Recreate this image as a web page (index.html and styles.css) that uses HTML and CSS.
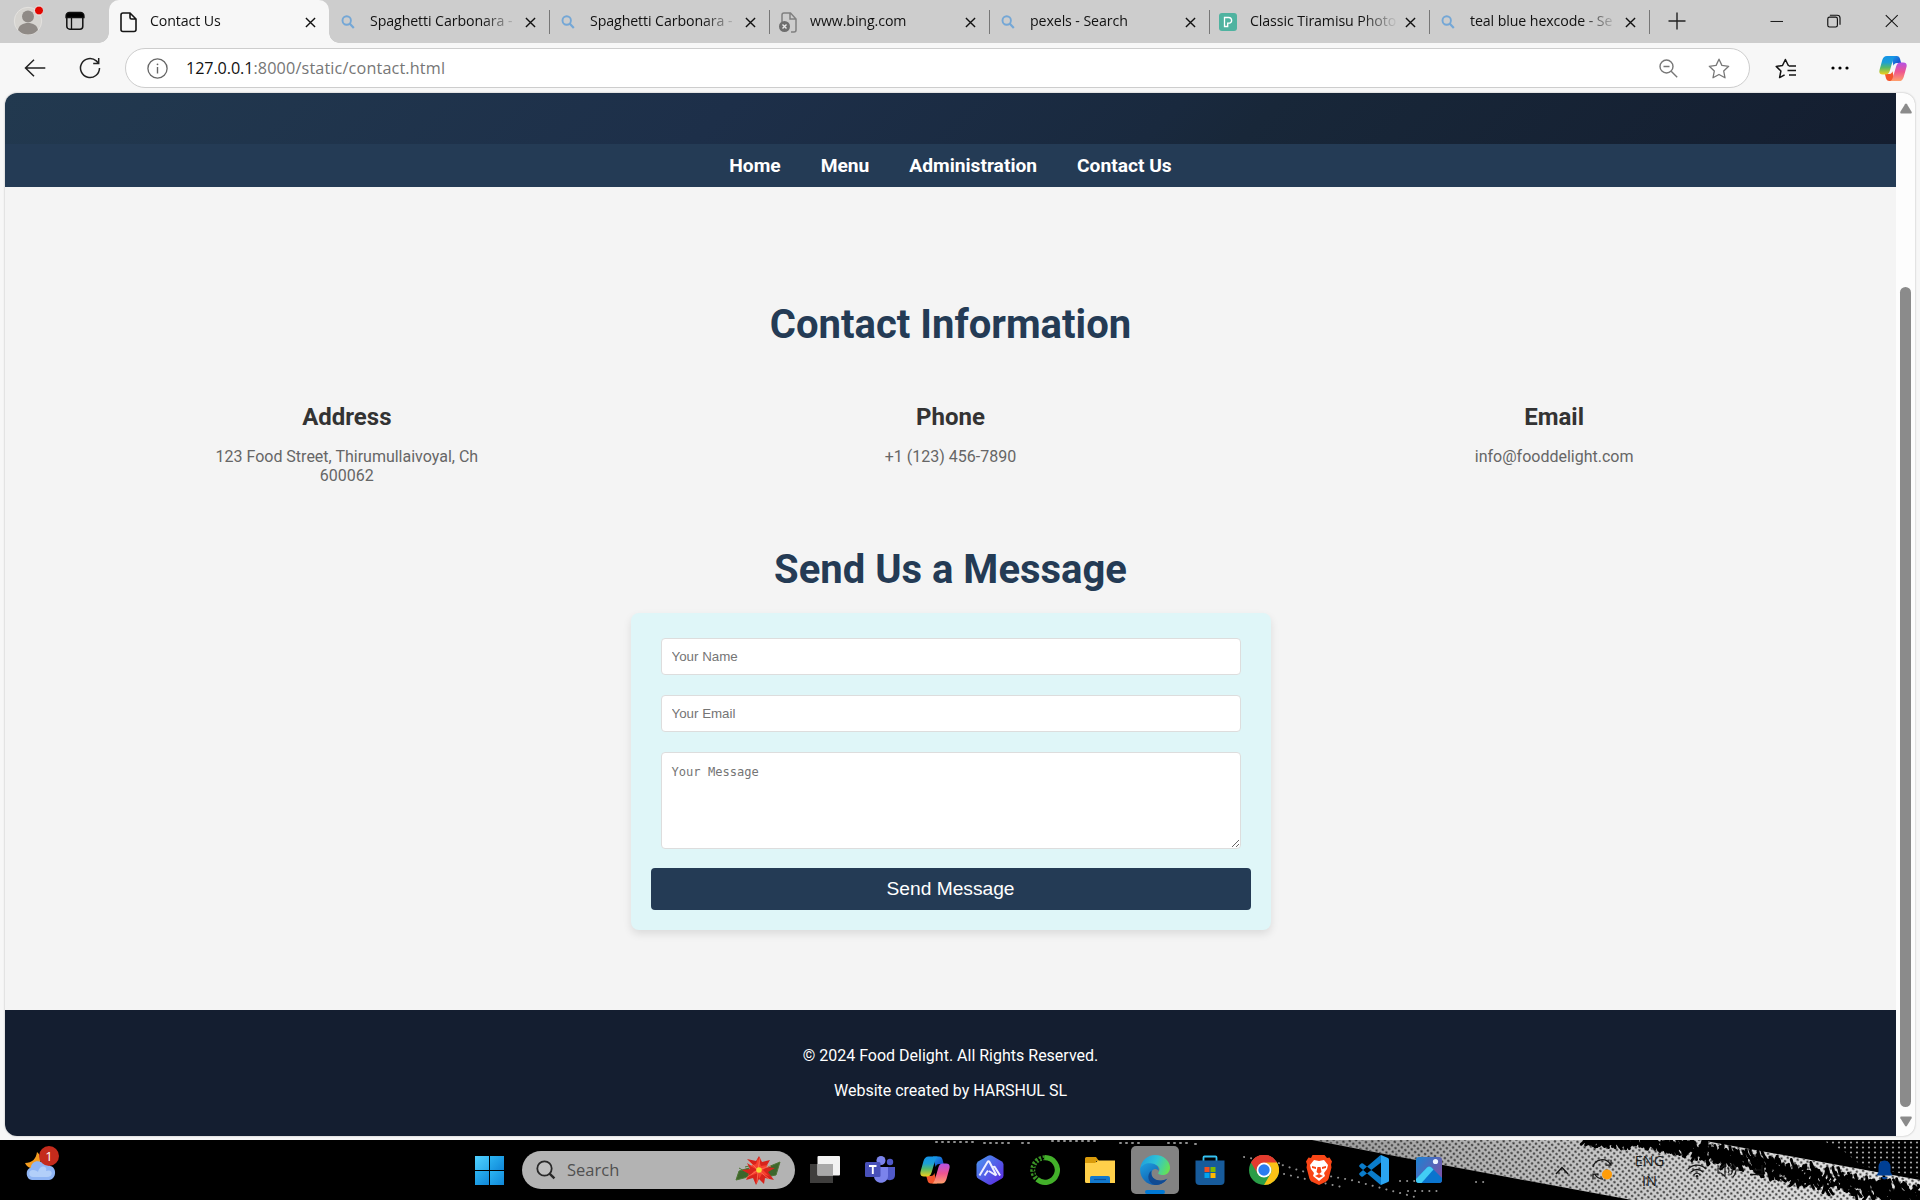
FILE: index.html
```html
<!DOCTYPE html>
<html lang="en">
<head>
<meta charset="utf-8">
<title>Contact Us</title>
<link rel="stylesheet" href="styles.css">
</head>
<body>
<svg class="defs" width="0" height="0">
  <defs>
    <symbol id="close" viewBox="0 0 12 12"><path d="M1 1l10 10M11 1L1 11" fill="none" stroke="#111" stroke-width="1.5"/></symbol>
    <symbol id="lens" viewBox="0 0 14 14"><circle cx="5.7" cy="5.5" r="4.2" fill="none" stroke="#74a7d6" stroke-width="1.9"/><path d="M8.6 8.6l4.2 4.4" stroke="#74a7d6" stroke-width="2.2"/></symbol>
    <linearGradient id="cpA" x1="0" y1="0" x2="0" y2="1"><stop offset="0" stop-color="#1493e8"/><stop offset=".35" stop-color="#1c9fd6"/><stop offset=".62" stop-color="#55b96a"/><stop offset="1" stop-color="#f3cf1b"/></linearGradient>
    <linearGradient id="cpB" x1="0" y1="0" x2="0" y2="1"><stop offset="0" stop-color="#b352e6"/><stop offset=".5" stop-color="#ee5590"/><stop offset="1" stop-color="#ffa06b"/></linearGradient>
    <linearGradient id="cpC" x1="0" y1="0" x2="1" y2="1"><stop offset="0" stop-color="#19a4ec"/><stop offset="1" stop-color="#1839c4"/></linearGradient>
    <symbol id="copilot" viewBox="0 0 30 28">
      <path d="M13 .5h6c2 0 3 1.300 3.500 3l1.200 4.500h-4.500c-2 0-3 1-3.600 3z" fill="url(#cpC)"/>
      <path d="M17 27.500h-6c-2 0-3-1.300-3.500-3L6.300 20h4.500c2 0 3-1 3.600-3z" fill="#f4552d"/>
      <path d="M8.500.5h9.300c-1.700 1-2.300 2.600-3 5l-3.200 11c-.8 2.600-2 4-4.600 4H4c-3.300 0-4.300-2-3.300-5.500L3.500 5C4.500 2 6 .5 8.500.5z" fill="url(#cpA)"/>
      <path d="M21.500 27.500h-9.300c1.700-1 2.300-2.600 3-5l3.200-11c.8-2.600 2-4 4.600-4h3c3.300 0 4.300 2 3.300 5.500L26.500 23c-1 3-2.500 4.500-5 4.500z" fill="url(#cpB)"/>
    </symbol>
  </defs>
</svg>

<header class="tabstrip">
  <div class="strip-tools">
    <svg class="avatar" width="30" height="30" viewBox="0 0 30 30"><circle cx="15" cy="16" r="13.700" fill="#d6d4d0" stroke="#e4e2df"/><circle cx="15" cy="11.500" r="6" fill="#8f8a86"/><path d="M5 25c1-5 5-7 10-7s9 2 10 7c-5 6-15 6-20 0z" fill="#8f8a86"/><circle cx="26" cy="5.500" r="4.500" fill="#e10600" stroke="#eee"/></svg>
    <svg class="workspace" width="20" height="20" viewBox="0 0 20 20"><rect x="1.800" y="2" width="16" height="16.200" rx="3" fill="none" stroke="#111" stroke-width="1.500"/><path d="M1 6.500V5a3.500 3.500 0 013.500-3.500h11A3.500 3.500 0 0119 5v1.500zM6.500 6v12" stroke="#111" stroke-width="1.300"/></svg>
  </div>
  <div class="tab active"><span class="ico"><svg width="17" height="21" viewBox="0 0 17 21"><path d="M3 1h7l6 6v10.500a2 2 0 01-2 2H3a2 2 0 01-2-2V3a2 2 0 012-2zM10 1v4.500A1.500 1.500 0 0011.500 7H16" fill="none" stroke="#151515" stroke-width="1.600"/></svg></span><span class="label">Contact Us</span><svg class="x"><use href="#close"/></svg></div>
  <div class="tab"><span class="ico"><svg width="14" height="14"><use href="#lens"/></svg></span><span class="label">Spaghetti Carbonara -</span><svg class="x"><use href="#close"/></svg></div>
  <div class="tab"><span class="ico"><svg width="14" height="14"><use href="#lens"/></svg></span><span class="label">Spaghetti Carbonara -</span><svg class="x"><use href="#close"/></svg></div>
  <div class="tab"><span class="ico"><svg width="18" height="21" viewBox="0 0 18 21"><path d="M3 10V3a2 2 0 012-2h6.500L17 7v11a2 2 0 01-2 2h-3M11 1v6h6" fill="none" stroke="#808080" stroke-width="1.500"/><circle cx="5.500" cy="14.500" r="5.500" fill="#6e6e6e"/><path d="M3.500 12.500l4 4m0-4l-4 4" stroke="#e8e8e8" stroke-width="1.400"/></svg></span><span class="label">www.bing.com</span><svg class="x"><use href="#close"/></svg></div>
  <div class="tab"><span class="ico"><svg width="14" height="14"><use href="#lens"/></svg></span><span class="label">pexels - Search</span><svg class="x"><use href="#close"/></svg></div>
  <div class="tab"><span class="ico"><svg width="18" height="18" viewBox="0 0 18 18"><rect width="18" height="18" rx="3" fill="#4fb3a0"/><path d="M5.500 13.500v-9h4.300a2.900 2.900 0 011 5.600H8.700v3.400z" fill="none" stroke="#fff" stroke-width="1.300"/></svg></span><span class="label">Classic Tiramisu Photo</span><svg class="x"><use href="#close"/></svg></div>
  <div class="tab"><span class="ico"><svg width="14" height="14"><use href="#lens"/></svg></span><span class="label">teal blue hexcode - Se</span><svg class="x"><use href="#close"/></svg></div>
  <svg class="plus" width="18" height="18" viewBox="0 0 18 18"><path d="M9 .5v17M.5 9h17" stroke="#222" stroke-width="1.400"/></svg>
  <div class="window-buttons">
    <svg viewBox="0 0 14 14"><path d="M.5 7.500h13" stroke="#111"/></svg>
    <svg viewBox="0 0 14 14"><rect x=".8" y="3" width="10" height="10.200" rx="1.800" fill="none" stroke="#111" stroke-width="1.200"/><path d="M3 1h7.500a3 3 0 013 3v7" fill="none" stroke="#111" stroke-width="1.200"/></svg>
    <svg viewBox="0 0 14 14"><path d="M.8.8l12.400 12.400M13.200.8L.8 13.200" stroke="#111" stroke-width="1.100"/></svg>
  </div>
</header>

<div class="toolbar">
  <svg class="back" width="22" height="18" viewBox="0 0 22 18"><path d="M10 .8L1.500 9l8.500 8.200M1.500 9h19.800" fill="none" stroke="#222" stroke-width="1.500"/></svg>
  <svg class="reload" width="22" height="22" viewBox="0 0 22 22"><path d="M20.500 11a9.500 9.500 0 11-3.200-7.100l2 2.100M19.700 1v5.600h-5.500" fill="none" stroke="#222" stroke-width="1.500"/></svg>
  <div class="address">
    <svg width="21" height="21" viewBox="0 0 21 21"><circle cx="10.500" cy="10.500" r="9.600" fill="none" stroke="#666" stroke-width="1.300"/><path d="M10.500 9v6.500" stroke="#666" stroke-width="1.400"/><circle cx="10.500" cy="6.300" r=".9" fill="#666"/></svg>
    <span class="url"><b>127.0.0.1</b>:8000/static/contact.html</span>
    <svg class="zoomout" width="19" height="19" viewBox="0 0 19 19"><circle cx="7.500" cy="7.500" r="6.500" fill="none" stroke="#777" stroke-width="1.400"/><path d="M4.500 7.500h6M12.200 12.200l6 6" stroke="#777" stroke-width="1.400"/></svg>
    <svg width="22" height="21" viewBox="0 0 22 21"><path d="M11 1.200l2.900 6.200 6.800.9-5 4.700 1.300 6.800-6-3.300-6 3.300 1.300-6.800-5-4.700 6.800-.9z" fill="none" stroke="#777" stroke-width="1.300" stroke-linejoin="round"/></svg>
  </div>
  <svg class="favs" width="22" height="21" viewBox="0 0 22 21"><path d="M14 7.500h-.7L10.400 1.500 7.500 7.500l-6.300.9 4.700 4.600-1.300 6.600 5-2.800M14 8h7M12.500 12.500h8.500M14 17h7" fill="none" stroke="#151515" stroke-width="1.500" stroke-linejoin="round"/></svg>
  <svg class="more" width="18" height="4" viewBox="0 0 18 4"><circle cx="2" cy="2" r="1.600"/><circle cx="9" cy="2" r="1.600"/><circle cx="16" cy="2" r="1.600"/></svg>
  <svg class="cp" width="28" height="27"><use href="#copilot"/></svg>
</div>

<div class="viewport">
  <div class="page">
    <div class="hero"></div>
    <nav class="nav"><a>Home</a><a>Menu</a><a>Administration</a><a>Contact Us</a></nav>
    <main class="main">
      <h2>Contact Information</h2>
      <div class="info">
        <div><h3>Address</h3><p>123 Food Street, Thirumullaivoyal, Ch<br>600062</p></div>
        <div><h3>Phone</h3><p>+1 (123) 456-7890</p></div>
        <div><h3>Email</h3><p>info@fooddelight.com</p></div>
      </div>
      <h2>Send Us a Message</h2>
      <form class="form">
        <input type="text" placeholder="Your Name">
        <input type="email" placeholder="Your Email">
        <textarea placeholder="Your Message"></textarea>
        <button type="button">Send Message</button>
      </form>
    </main>
    <footer class="footer"><p>© 2024 Food Delight. All Rights Reserved.</p><p>Website created by HARSHUL SL</p></footer>
  </div>
  <div class="scrollbar">
    <svg width="12" height="11" viewBox="0 0 12 11"><path d="M5 1.200a1.200 1.200 0 012 0l4.600 7.600c.4.800 0 1.600-1 1.600H1.400c-1 0-1.400-.8-1-1.600z" fill="#8b8b8b"/></svg>
    <div class="thumb"></div>
    <svg width="12" height="11" viewBox="0 0 12 11"><path d="M5 9.800a1.200 1.200 0 002 0l4.600-7.600c.4-.8 0-1.600-1-1.600H1.400c-1 0-1.400.8-1 1.600z" fill="#8b8b8b"/></svg>
  </div>
</div>

<div class="taskbar">
  <svg class="wallpaper" width="1920" height="60" viewBox="0 0 1920 60">
    <defs>
      <pattern id="dots" width="4.500" height="4.500" patternUnits="userSpaceOnUse" patternTransform="rotate(38)"><circle cx="2.200" cy="2.200" r="1.150" fill="#333"/></pattern>
      <pattern id="pale" width="6" height="5" patternUnits="userSpaceOnUse"><circle cx="3" cy="2.500" r="1.100" fill="#a5a5a5"/></pattern>
      <linearGradient id="gray"><stop offset="0" stop-color="#999"/><stop offset=".5" stop-color="#c8c8c8"/><stop offset="1" stop-color="#e8e8e8"/></linearGradient>
    </defs>
    <path d="M1312 0H1700L1800 18 1920 40V60H1632L1540 43 1400 17z" fill="url(#gray)"/>
    <path d="M1312 0H1700L1800 18 1920 40V60H1632L1540 43 1400 17z" fill="url(#dots)"/>
    <path id="hatch" fill="none" stroke="#000" stroke-width="2.800" stroke-linecap="round" stroke-linejoin="round"/>
    <path d="M1822 0H1920V37L1862 26 1845 12z" fill="url(#pale)"/>
    <g fill="none" stroke="#8f8f8f" stroke-width="2" stroke-linecap="round">
      <path d="M936 2h38M984 3h26M1022 3h10M1052 1h48M1120 3h20M1168 3h20M1195 4h1" stroke-dasharray="1 5"/>
      <path d="M1276 23l25 8 50 9 30 8 34 9M1284 34l30 7 28 6M1244 17l40 7M1400 41h40M1396 12h9M1408 51h34M1476 42h12" stroke-dasharray=".1 7"/>
    </g>
  </svg>
  <div class="weather"><svg width="36" height="38" viewBox="0 0 36 38"><path d="M12 8c6 5 5 13-4 17-4-1-7-3-8-6 7 0 11-4 12-11z" fill="#f39c1f"/><path d="M7 36a6.500 6.500 0 01-1-12.500C6 19 11 16 16 18c6-1 8 2 9 4 7 1 7 13-1 14z" fill="#8fb5f4"/><path d="M8 33c-5 0-5-7 0-7 3 0 4 1 5 2 2-8 10-6 8-1 7-3 8 6 1 6z" fill="#b2cff9"/></svg><span class="badge">1</span></div>
  <div class="apps">
    <div class="start"><i></i><i></i><i></i><i></i></div>
    <div class="search">
      <svg width="20" height="20" viewBox="0 0 20 20"><circle cx="8.500" cy="8.500" r="7.200" fill="#bfbfbf" stroke="#292929" stroke-width="1.800"/><path d="M13.600 13.600l4.800 4.800" stroke="#292929" stroke-width="2.400"/></svg>
      <span>Search</span>
      <svg class="flower" width="46" height="29" viewBox="0 0 46 29"><path d="M14 12L4 15l-3 9 12-3zM4 12l7 4M10 11l4-1M33 11l12-5-4 13-10 2z" fill="#3d662b" stroke="#4e7635"/><path d="M23 14L12 3l9 2 3-5 3 6 8-2-4 7 9 1-7 4 6 8-9-2-1 6-5-5-3 6-3-7-7 2 3-6-7-4 8-1-3-6z" fill="#d8231c"/><path d="M23 14l-8-4 6-2 2-6 3 8 7-1-5 5 6 6-7-2-3 5-1-6-8 3 4-5z" fill="#f8412f"/><path d="M23 14L14 5M23 14l2-12M23 14l13-4M23 14l11 9M23 14l-1 13M23 14l-12 8" stroke="#ff7358" stroke-width=".8"/><circle cx="24" cy="14" r="2.800" fill="#f3dc35"/></svg>
    </div>
    <div class="app"><svg viewBox="0 0 30 30"><rect x="0" y="9" width="23" height="19" fill="#3f3e3d"/><rect x="7.500" y="1" width="22.500" height="19.500" rx="1" fill="#f2f2f2"/><path d="M7.500 9H23v11.500H7.500z" fill="#a9a9a9"/></svg></div>
    <div class="app"><svg viewBox="0 0 30 30"><circle cx="16" cy="5.500" r="4.500" fill="#7b83eb"/><circle cx="25" cy="7" r="3.200" fill="#5059c9"/><path d="M20 12h10v8c0 6-8 7-10 2z" fill="#5059c9"/><path d="M9 12h14v9c0 9-14 9-14 0z" fill="#7b83eb"/><rect y="7" width="15.500" height="15" rx="1.500" fill="#4850b8"/><path d="M4 11h7.500M7.800 11v8" stroke="#fff" stroke-width="1.900"/></svg></div>
    <div class="app"><svg viewBox="0 0 30 30"><use href="#copilot" y="1" width="30" height="28"/></svg></div>
    <div class="app"><svg viewBox="0 0 30 30"><defs><linearGradient id="hx" x1="0" y1="0" x2="1" y2="1"><stop offset="0" stop-color="#4a9af0"/><stop offset="1" stop-color="#5b22e0"/></linearGradient></defs><path d="M13 .7q2-1 4 0l9.500 5.600q2 1.200 2 3.300v10.800q0 2.100-2 3.300L17 29.300q-2 1-4 0l-9.500-5.600q-2-1.200-2-3.300V9.600q0-2.100 2-3.300z" fill="url(#hx)"/><path d="M4.500 20.500L12.500 7q1-1.500 2 0l7 13.500M9.500 20.500l3.500-5M18.500 12.500q.8-1.500 1.600 0l5 8M14 16l7 4.500" fill="none" stroke="#eef" stroke-width="2"/></svg></div>
    <div class="app"><svg viewBox="0 0 30 30"><path d="M15 2.700a12.300 12.300 0 11-8 21.600" fill="none" stroke="#43b02a" stroke-width="5.200"/><path d="M15 2.700a12.300 12.300 0 00-8 21.600" fill="none" stroke="#3a9426" stroke-width="5" stroke-dasharray="2.200 1.500"/><path d="M14 3.500A11.500 11.500 0 005 21" fill="none" stroke="#000" stroke-width="1.400" stroke-dasharray="2 2"/></svg></div>
    <div class="app"><svg viewBox="0 0 30 30"><path d="M0 3.500Q0 2 1.500 2H11l3 4h-3v5H0z" fill="#d99b0b"/><path d="M0 8h10l3-2.500h17V28H1.500Q0 28 0 26.500z" fill="#ffd04a"/><path d="M5 28v-5.500Q5 21 6.500 21H23q2 0 2 1.500V28z" fill="#1279ce"/><path d="M9 24.500h12" stroke="#0a4f9a" stroke-width="1.200"/></svg></div>
    <div class="app current"><svg viewBox="0 0 30 30"><defs><linearGradient id="eg" x1="0" y1=".3" x2="1" y2=".6"><stop offset="0" stop-color="#1f9fdf"/><stop offset=".5" stop-color="#2fc3d5"/><stop offset="1" stop-color="#66e253"/></linearGradient><linearGradient id="eb" x1="0" y1="0" x2=".8" y2="1"><stop offset="0" stop-color="#1fa0e0"/><stop offset="1" stop-color="#0c4fa5"/></linearGradient></defs><path d="M.3 13C1.500 5.500 7.500 0 15 0c9 0 15 6.500 15 12.500 0 5-3.500 7.500-7 7.500-3.500 0-5.500-1-4.500-2.500 3-4-.5-8-5-8C7 9.500 2 12 .3 15z" fill="url(#eg)"/><path d="M.2 13.500C2 9.500 7 7.500 12 8.500c5 .8 7.500 4 6.500 7.500-1-3-7-3-7 2.500 0 7 8.500 9 15.500 5.500C24 28 20 30 15 30 6 30-.6 22 .2 13.500z" fill="url(#eb)"/><path d="M11.500 15.500c-2 8 7 13 16 8C24 28 20 30 15 30 8 28 6 20 11.500 15.500z" fill="#114b93"/></svg></div>
    <div class="app"><svg viewBox="0 0 30 30"><path d="M8.500 6V2.500Q8.500 1.500 9.500 1.500h11q1 0 1 1V6" fill="none" stroke="#35c1f1" stroke-width="1.800"/><path d="M.5 5.500h29V26q0 4-4 4h-21q-4 0-4-4z" fill="#175b9b"/><path d="M9.500 12h5v5h-5z" fill="#f25022"/><path d="M15.500 12h5v5h-5z" fill="#7fba00"/><path d="M9.500 18h5v5h-5z" fill="#00a4ef"/><path d="M15.500 18h5v5h-5z" fill="#ffb900"/></svg></div>
    <div class="app"><svg viewBox="0 0 30 30"><circle cx="15" cy="15" r="15" fill="#2a9d47"/><path d="M15 15L2 7.500a15 15 0 0126 0z" fill="#e33b2e"/><path d="M2 7.500A15 15 0 0128 7.500H15a7.500 7.500 0 00-6.500 11z" fill="#e33b2e"/><path d="M28 7.500A15 15 0 0115 30l6.500-11.300A7.500 7.500 0 0015 7.500z" fill="#fbc116"/><circle cx="15" cy="15" r="7.400" fill="#fff"/><circle cx="15" cy="15" r="5.700" fill="#2b7cf0"/></svg></div>
    <div class="app"><svg viewBox="0 0 30 30"><path d="M8.500 0h12L23 3l2.500-.5 2.500 4-1 3 .5 3-3 11.500q-1 2-3 3L15 30l-6.500-3q-2-1-3-3l-3-11.500.5-3-1-3 2.500-4L7 3z" fill="#fa4616"/><path d="M10 5l5 1 5-1 4 5-1 4-3 4 1 3-6 5-6-5 1-3-3-4-1-4z" fill="#fff"/><path d="M8 11l4 1v2l-4-1M22 11l-4 1v2l4-1M13.500 12l-1 5 2.500 2 2.500-2-1-5M11 21l4-2 4 2-4 2z" fill="#fa4616"/></svg></div>
    <div class="app"><svg viewBox="0 0 30 30"><path d="M22 0l7 3q1 .5 1 1.500v21q0 1-1 1.500l-7 3z" fill="#2aa5f2"/><path d="M22 7.500L4 21.500q-1 .6-1.800 0L.6 20q-.9-1 0-2L21 .5l1-.5zM22 22.500L4 8.500q-1-.6-1.800 0L.6 10q-.9 1 0 2L21 29.500l1 .5z" fill="#0a7ccb"/></svg></div>
    <div class="app"><svg viewBox="0 0 30 30"><defs><linearGradient id="ph" x1="0" y1="0" x2="1" y2=".7"><stop offset="0" stop-color="#1a83d4"/><stop offset="1" stop-color="#7b53a8"/></linearGradient></defs><rect x="2" y="2" width="26" height="26" rx="3" fill="url(#ph)"/><path d="M2 24L13 12.500q2-2 4.500 0L28 23v2q0 3-3 3H5q-3 0-3-3z" fill="#0a74ce"/><path d="M2 24L13 12.500q2-2 4.500 0l2 2L7.500 28H5q-3 0-3-3z" fill="#42cdf5"/><circle cx="21.500" cy="6.500" r="2.600" fill="#edf5ff"/></svg></div>
  </div>
  <div class="tray">
    <svg class="chev" width="14" height="9" viewBox="0 0 14 9"><path d="M1 8l6-6.500L13 8" fill="none" stroke="#111" stroke-width="1.500"/></svg>
    <svg class="sync" width="22" height="22" viewBox="0 0 22 22"><path d="M2 8a9.500 9.500 0 0117.500-2.500M20 .8v5.400h-5.500M12 20c-4 0-6.500-2-8.500-5M2 20.500v-5.400h5.500" fill="none" stroke="#151515" stroke-width="1.300"/><circle cx="16" cy="15.500" r="5" fill="#ff9d0a"/></svg>
    <div class="lang"><span>ENG</span><span>IN</span></div>
    <svg class="wifi" width="20" height="15" viewBox="0 0 20 15"><path d="M1 6a12.500 12.500 0 0118 0M4 9a8.500 8.500 0 0112 0M6.700 11.700a4.800 4.800 0 016.600 0" fill="none" stroke="#151515" stroke-width="1.400"/><circle cx="10" cy="13.300" r="1.300" fill="#151515"/></svg>
    <svg class="sound" width="20" height="15" viewBox="0 0 20 15"><path d="M1 5h3l4-3.500v12L4 10H1zM11 5q2 2.500 0 5M13.500 3q4 4.500 0 9M16 1q6 6.500 0 13" fill="none" stroke="#1d1d1d" stroke-width="1.200"/></svg>
    <svg class="battery" width="18" height="12" viewBox="0 0 18 12"><path d="M1 10.500h13M4 6h9M13 1v8" fill="none" stroke="#111" stroke-width="1.500"/></svg>
    <svg class="bell" width="17" height="20" viewBox="0 0 17 20"><path d="M8.500.5a6 6 0 016 6v5.500l2 3.500H.5l2-3.500V6.500a6 6 0 016-6zM5.500 17h6q-1 2.500-3 2.500t-3-2.500z" fill="#003f94"/></svg>
  </div>
</div>
<script src="wallpaper.js"></script>
</body>
</html>
```
FILE: styles.css
```css
* { box-sizing: border-box; }
body { margin: 0; width: 1920px; height: 1200px; overflow: hidden; background: #f7f7f7; font-family: "Open Sans", "Noto Sans", sans-serif; }
h2, h3, p { margin: 0; }
svg { display: block; flex: none; }
.defs { position: absolute; }

/* browser tabs */
.tabstrip { display: flex; height: 43px; background: #cdcdcd; }
.strip-tools { display: flex; width: 109px; padding-left: 13px; gap: 22px; }
.avatar { margin-top: 5px; }
.workspace { margin-top: 11px; }
.tab { position: relative; display: flex; align-items: center; width: 220px; padding-left: 8px; height: 43px; }
.tab::after { content: ""; position: absolute; right: -1px; top: 10px; width: 1px; height: 24px; background: #777; }
.tab .ico { width: 22px; display: flex; justify-content: center; padding-top: 1px; }
.tab .label { margin-left: 11px; width: 155px; padding-bottom: 2px; white-space: nowrap; font-size: 14.200px; letter-spacing: -.1px; color: #111; mask-image: linear-gradient(90deg, #000 112px, transparent 148px); }
.tab .x { width: 11px; height: 11px; margin-top: 1px; }
.tab.active { background: #f7f7f7; border-radius: 10px 10px 0 0; }
.tab.active::after { display: none; }
.tab.active::before { content: ""; position: absolute; left: -10px; right: -10px; bottom: 0; height: 10px; background: radial-gradient(circle at 0 0, transparent 9.500px, #f7f7f7 10px) left / 10px 10px no-repeat, radial-gradient(circle at 10px 0, transparent 9.500px, #f7f7f7 10px) right / 10px 10px no-repeat; }
.plus { margin: 12px 0 0 19px; }
.window-buttons { display: flex; gap: 44px; margin-left: auto; padding: 14px 22px 0 0; }
.window-buttons svg { width: 13.500px; height: 14px; }

/* address row */
.toolbar { display: flex; align-items: center; height: 50px; padding-left: 24px; }
.reload { margin-left: 33px; }
.address { display: flex; align-items: center; width: 1625px; height: 40px; margin-left: 24px; padding: 0 19px 0 21px; border: 1px solid #cdcdcd; border-radius: 20px; background: #fff; }
.url { margin-left: 18px; flex: 1; padding-bottom: 1px; font-size: 16.200px; letter-spacing: .15px; color: #767676; }
.url b { font-weight: 400; letter-spacing: -.1px; color: #111; }
.zoomout { margin-right: 30px; }
.favs { margin-left: 25px; }
.more { margin-left: 34px; }
.cp { margin-left: 30px; }

/* web page */
.viewport { display: flex; width: 1910px; height: 1043px; margin-left: 5px; border-radius: 12px; overflow: hidden; background: #fdfdfd; box-shadow: 0 0 2px #aaa; }
.page { width: 1891px; font-family: Roboto, sans-serif; background: #f4f4f4; }
.hero { height: 51px; background: linear-gradient(135deg, #22394f, #1d2f49 38%, #19293e 61%, #182739 66%, #141e30); }
.nav { display: flex; justify-content: center; align-items: center; gap: 40px; height: 43px; background: #243b55; color: #fff; font-size: 19.200px; font-weight: 700; }
.main { height: 823px; padding-top: 114px; text-align: center; }
.main h2 { height: 48px; line-height: 48px; font-size: 40px; font-weight: 700; color: #243b55; }
.info { display: grid; grid-template-columns: repeat(3, 1fr); padding: 0 40px; margin: 54px 0 61px; color: #666; font-size: 16px; line-height: 19px; }
.info h3 { height: 28px; margin-bottom: 16px; line-height: 28px; font-size: 24px; color: #333; }
.form { display: flex; flex-direction: column; gap: 20px; width: 640px; height: 317px; margin: 19px auto 0; padding: 25px 20px 20px; border-radius: 8px; background: #dff6f8; box-shadow: 0 4px 8px rgba(0, 0, 0, .1); }
.form input, .form textarea { margin: 0 10px; padding: 10px; border: 1px solid #ddd; border-radius: 4px; background: #fff; outline: 0; }
.form input { height: 37px; font: 13.333px "Liberation Sans", Arial, sans-serif; }
.form textarea { height: 97px; margin-bottom: -1px; padding-top: 11px; font: 12.100px/16px "DejaVu Sans Mono", monospace; }
.form button { height: 42px; border: 0; border-radius: 4px; background: #243b55; color: #fff; font: 19.200px "Liberation Sans", Arial, sans-serif; }
.footer { display: flex; flex-direction: column; gap: 16px; height: 126px; padding-top: 36px; background: #141e30; color: #fff; text-align: center; font-size: 16px; line-height: 19px; }
.scrollbar { display: flex; flex-direction: column; align-items: center; flex: 1; padding: 10px 0 9px; }
.thumb { width: 11px; height: 820px; margin: 173px 0 auto; border-radius: 6px; background: #8b8b8b; }

/* taskbar */
.taskbar { position: relative; display: flex; align-items: center; height: 60px; margin-top: 4px; background: #000; }
.wallpaper { position: absolute; left: 0; top: 0; }
.weather { position: relative; width: 475px; padding: 2px 0 0 25px; }
.weather svg { margin-top: -16px; }
.badge { position: absolute; left: 39px; top: -12px; width: 20px; height: 20px; border-radius: 50%; background: #c42b1c; color: #fff; font-size: 13px; line-height: 20px; text-align: center; }
.apps { position: relative; display: flex; align-items: center; height: 60px; }
.start { display: grid; grid-template-columns: 14px 14px; gap: 1px; margin-top: 1px; }
.start i { height: 14px; background: linear-gradient(135deg, #2bb4f2, #1087d8); }
.start i:first-child { background: linear-gradient(135deg, #4fd0ff, #2cabec); }
.search { display: flex; align-items: center; width: 273px; height: 38px; margin: 0 3px 0 18px; padding: 0 14px; border-radius: 19px; background: #b3b3b3; }
.search span { flex: 1; margin-left: 11px; font-size: 16.500px; color: #505050; padding-bottom: 1px; }
.app { position: relative; display: flex; align-items: center; justify-content: center; width: 48px; height: 48px; margin: 0 3.450px; border-radius: 5px; }
.app svg { width: 30px; height: 30px; }
.current { background: #838383; }
.current::after { content: ""; position: absolute; left: 14px; bottom: 0; width: 20px; height: 4px; border-radius: 2px; background: #0078d4; }
.tray { position: relative; display: flex; align-items: center; flex: 1; height: 60px; padding-right: 27px; color: #191919; }
.chev { margin-left: 98px; }
.sync { margin-left: 22px; }
.lang { display: flex; flex-direction: column; width: 40px; margin-left: 17px; padding-top: 1px; text-align: center; font-size: 14.500px; line-height: 20px; }
.wifi { margin-left: 17px; }
.sound { margin-left: 10px; }
.battery { margin-left: 12px; }
.bell { margin-left: auto; }
```
FILE: wallpaper.js
```js
// Brush-like strokes of the desktop wallpaper visible through the taskbar.
let seed = 7;
const rnd = () => (seed = (seed * 16807) % 2147483647) / 2147483647;
const edge = (x, pts) => {
  for (let i = 1; i < pts.length; i++) {
    if (x <= pts[i][0]) {
      const [x0, y0] = pts[i - 1], [x1, y1] = pts[i];
      return y0 + (y1 - y0) * (x - x0) / (x1 - x0);
    }
  }
  return 60;
};
const upper = [[1580, -4], [1700, -1], [1800, 20], [1920, 44]];
const lower = [[1580, 3], [1640, 5], [1690, 17], [1800, 45], [1920, 68]];
let d = "";
for (let i = 0; i < 620; i++) {
  const x = 1584 + rnd() * 336;
  const a = edge(x, upper), b = edge(x, lower);
  // strokes crowd toward the lower middle of the band
  const t = (rnd() + rnd()) / 2;
  const y = a + (b - a) * (0.1 + t * 0.95);
  const len = 3 + rnd() * 7;
  const lean = rnd() < 0.75 ? 1 : -1;
  d += `M${x.toFixed(1)} ${(y - len / 2).toFixed(1)}q${(rnd() * 3 - 1).toFixed(1)} ${(len * 0.5).toFixed(1)} ${(lean * (1 + rnd() * 4)).toFixed(1)} ${len.toFixed(1)}`;
}
document.getElementById("hatch").setAttribute("d", d);
```
